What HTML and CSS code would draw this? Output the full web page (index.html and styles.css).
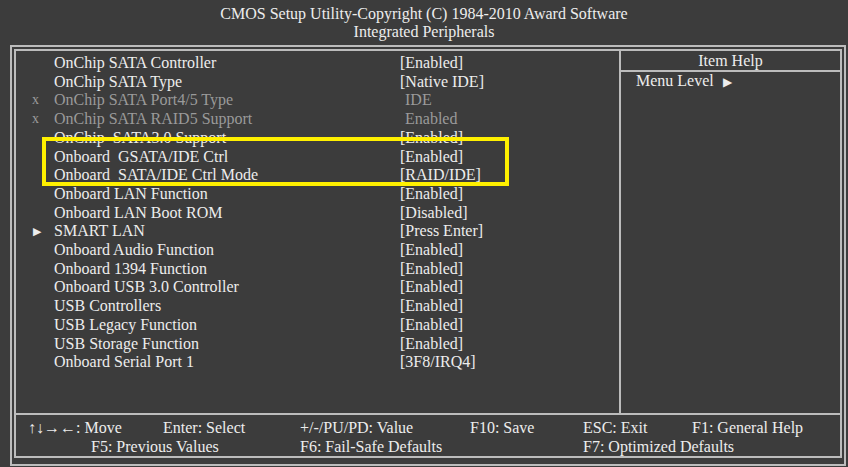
FILE: index.html
```html
<!DOCTYPE html>
<html lang="en">
<head>
    <meta charset="UTF-8">
    <title>Integrated Peripherals</title>
    <link rel="stylesheet" href="styles.css">
</head>
<body>
    <div class="header">
        <div>CMOS Setup Utility-Copyright (C) 1984-2010 Award Software</div>
        <div>Integrated Peripherals</div>
    </div>

    <div class="frame">
        <div class="inner">
            <div class="main">
                <!-- Settings list -->
                <div class="list">
                    <div class="row"><span class="mark"></span><span>OnChip SATA Controller</span><span>[Enabled]</span></div>
                    <div class="row"><span class="mark"></span><span>OnChip SATA Type</span><span>[Native IDE]</span></div>
                    <div class="row off"><span class="mark">x</span><span>OnChip SATA Port4/5 Type</span><span class="bare">IDE</span></div>
                    <div class="row off"><span class="mark">x</span><span>OnChip SATA RAID5 Support</span><span class="bare">Enabled</span></div>
                    <div class="row"><span class="mark"></span><span>OnChip&nbsp; SATA3.0 Support</span><span>[Enabled]</span></div>
                    <div class="row"><span class="mark"></span><span>Onboard&nbsp; GSATA/IDE Ctrl</span><span>[Enabled]</span></div>
                    <div class="row"><span class="mark"></span><span>Onboard&nbsp; SATA/IDE Ctrl Mode</span><span>[RAID/IDE]</span></div>
                    <div class="row"><span class="mark"></span><span>Onboard LAN Function</span><span>[Enabled]</span></div>
                    <div class="row"><span class="mark"></span><span>Onboard LAN Boot ROM</span><span>[Disabled]</span></div>
                    <div class="row"><span class="mark arrow">&#9654;</span><span>SMART LAN</span><span>[Press Enter]</span></div>
                    <div class="row"><span class="mark"></span><span>Onboard Audio Function</span><span>[Enabled]</span></div>
                    <div class="row"><span class="mark"></span><span>Onboard 1394 Function</span><span>[Enabled]</span></div>
                    <div class="row"><span class="mark"></span><span>Onboard USB 3.0 Controller</span><span>[Enabled]</span></div>
                    <div class="row"><span class="mark"></span><span>USB Controllers</span><span>[Enabled]</span></div>
                    <div class="row"><span class="mark"></span><span>USB Legacy Function</span><span>[Enabled]</span></div>
                    <div class="row"><span class="mark"></span><span>USB Storage Function</span><span>[Enabled]</span></div>
                    <div class="row"><span class="mark"></span><span>Onboard Serial Port 1</span><span>[3F8/IRQ4]</span></div>

                    <!-- highlight box drawn over the rows -->
                    <div class="highlight"></div>
                </div>

                <!-- Help panel -->
                <div class="help">
                    <div class="help-title">Item Help</div>
                    <div class="help-line">Menu Level <span class="arrow">&#9654;</span></div>
                </div>
            </div>

            <div class="footer">
                <span>&#8593;&#8595;&#8594;&#8592;: Move</span>
                <span>Enter: Select</span>
                <span>+/-/PU/PD: Value</span>
                <span>F10: Save</span>
                <span>ESC: Exit</span>
                <span>F1: General Help</span>
                <span class="f5">F5: Previous Values</span>
                <span>F6: Fail-Safe Defaults</span>
                <span class="f7">F7: Optimized Defaults</span>
            </div>
        </div>
    </div>
</body>
</html>
```
FILE: styles.css
```css
body {
    margin: 0;
    width: 848px;
    height: 467px;
    background-color: #3c3c3c;
    color: #ededed;
    font-family: "Liberation Serif", "Times New Roman", serif;
    font-size: 16px;
    overflow: hidden;
}

.header {
    text-align: center;
    line-height: 18px;
    padding-top: 5px;
    height: 40px;
}

.frame {
    margin-left: 10px;
    width: 828px;
    height: 413px;
    border: 2px solid #bcbcbc;
    padding: 2px;
    box-sizing: content-box;
}

.inner {
    border: 2px solid #bcbcbc;
    height: 405px;
    display: flex;
    flex-direction: column;
}

.main {
    display: flex;
    height: 362px;
    border-bottom: 2px solid #bcbcbc;
}

.list {
    position: relative;
    width: 603px;
    padding-top: 3px;
    border-right: 2px solid #bcbcbc;
}

.row {
    display: grid;
    grid-template-columns: 22px 346px auto;
    padding-left: 16px;
    line-height: 18.7px;
    white-space: nowrap;
}

.row.off {
    color: #9a9a9a;
}

.mark {
    font-size: 14px;
}

.mark.arrow {
    font-size: 11px;
    padding-left: 1px;
}

.bare {
    padding-left: 5px;
}

.highlight {
    position: absolute;
    left: 26px;
    top: 86px;
    width: 459px;
    height: 41px;
    border: 4px solid #fff000;
}

.help {
    flex: 1;
}

.help-title {
    text-align: center;
    line-height: 18px;
    padding-top: 1px;
    border-bottom: 2px solid #bcbcbc;
}

.help-line {
    padding-left: 15px;
    line-height: 18.7px;
}

.help-line .arrow {
    font-size: 12px;
    padding-left: 5px;
}

.footer {
    display: grid;
    grid-template-columns: 135px 137px 170px 113px 109px auto;
    padding-left: 12px;
    padding-top: 3px;
    line-height: 19px;
    white-space: nowrap;
}

.f5 {
    grid-column: 1 / 3;
    padding-left: 63px;
}

.f7 {
    grid-column: 5 / 7;
}
```
